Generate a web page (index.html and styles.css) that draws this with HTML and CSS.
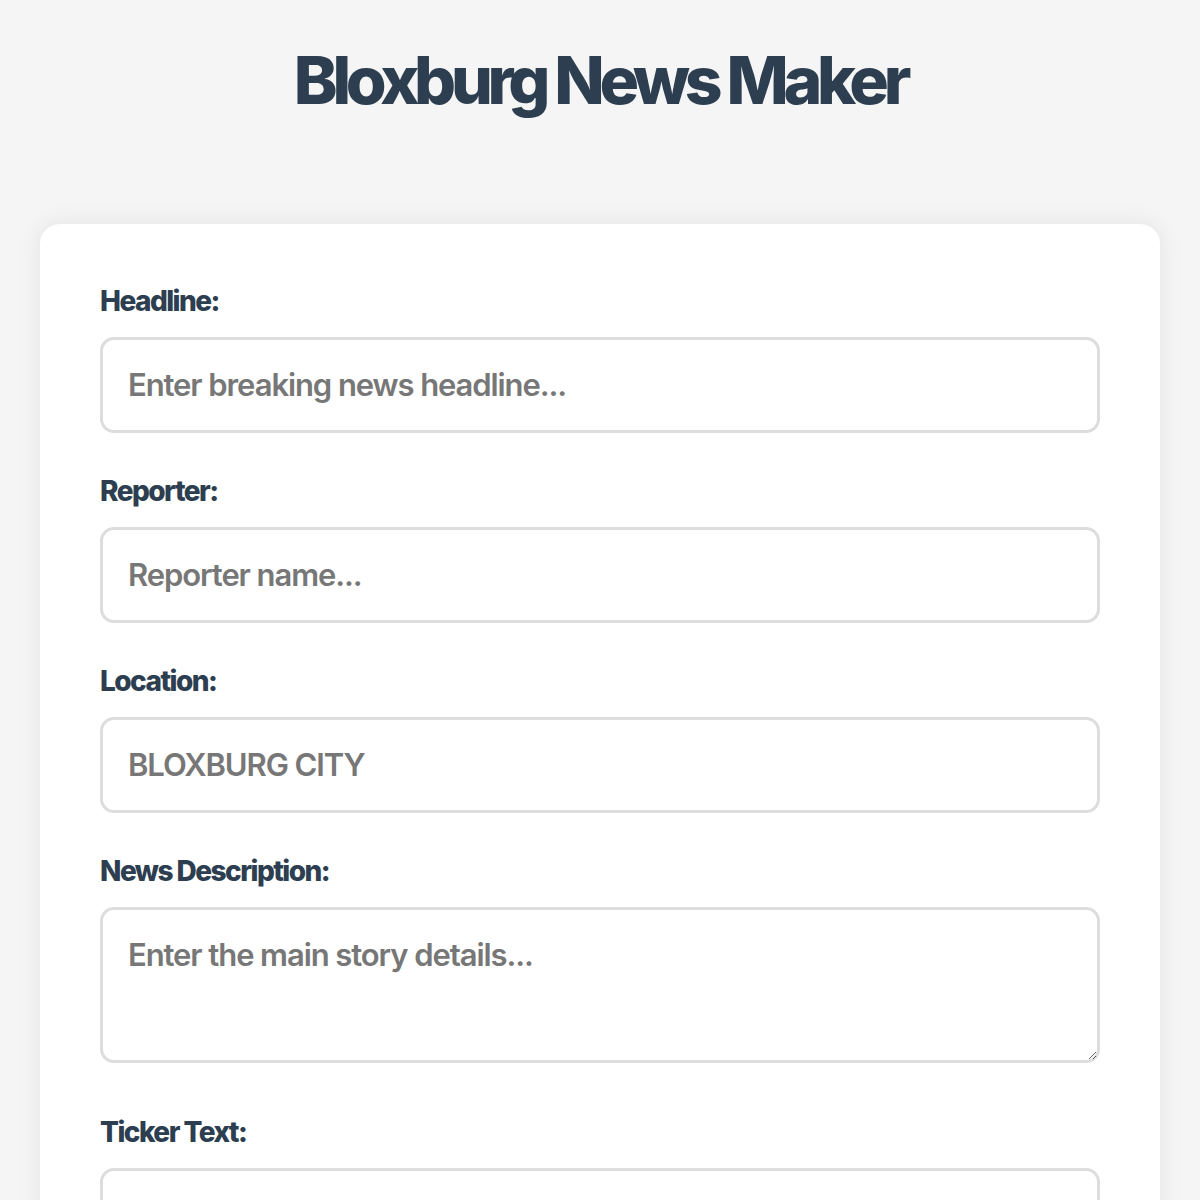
FILE: index.html
```html
<!DOCTYPE html>
<html lang="en">
<head>
  <meta charset="UTF-8">
  <meta name="viewport" content="width=device-width, initial-scale=1.0">
  <title>Bloxburg News Maker</title>
  <link rel="stylesheet" href="styles.css">
</head>
<body>
  <h1>Bloxburg News Maker</h1>

  <div class="editor">
    <div class="campo">
      <label for="headline">Headline:</label>
      <input type="text" id="headline" placeholder="Enter breaking news headline...">
    </div>

    <div class="campo">
      <label for="reporter">Reporter:</label>
      <input type="text" id="reporter" placeholder="Reporter name...">
    </div>

    <div class="campo">
      <label for="location">Location:</label>
      <input type="text" id="location" placeholder="BLOXBURG CITY">
    </div>

    <div class="campo">
      <label for="description">News Description:</label>
      <textarea id="description" placeholder="Enter the main story details..."></textarea>
    </div>

    <div class="campo">
      <label for="ticker">Ticker Text:</label>
      <input type="text" id="ticker">
    </div>
  </div>
</body>
</html>
```

FILE: styles.css
```css
body {
  font-family: Inter, "Open Sans", sans-serif;
  background: #f5f5f5;
  color: #2c3e50;
  margin: 0;
  padding: 20px 40px;
}
h1 {
  text-align: center;
  font-size: 66px;
  font-weight: 800;
  letter-spacing: -0.08em;
  margin: 21px 0 104px;
  line-height: 1.2;
}
.editor {
  background: #fff;
  border-radius: 20px;
  box-shadow: 0 0 24px rgba(0, 0, 0, 0.08);
  padding: 60px;
}
.campo {
  margin-bottom: 41px;
}
label {
  display: block;
  font-size: 28px;
  font-weight: 800;
  letter-spacing: -0.055em;
  margin-bottom: 19px;
}
input, textarea {
  display: block;
  width: 100%;
  box-sizing: border-box;
  font-family: inherit;
  font-size: 31px;
  font-weight: 600;
  line-height: 36px;
  letter-spacing: -0.035em;
  color: #333;
  border: 3px solid #ddd;
  border-radius: 14px;
  padding: 27px 25px;
  outline: none;
}
textarea {
  height: 156px;
  margin-bottom: 52px;
  resize: vertical;
}
input::placeholder, textarea::placeholder {
  color: #777;
}
```
